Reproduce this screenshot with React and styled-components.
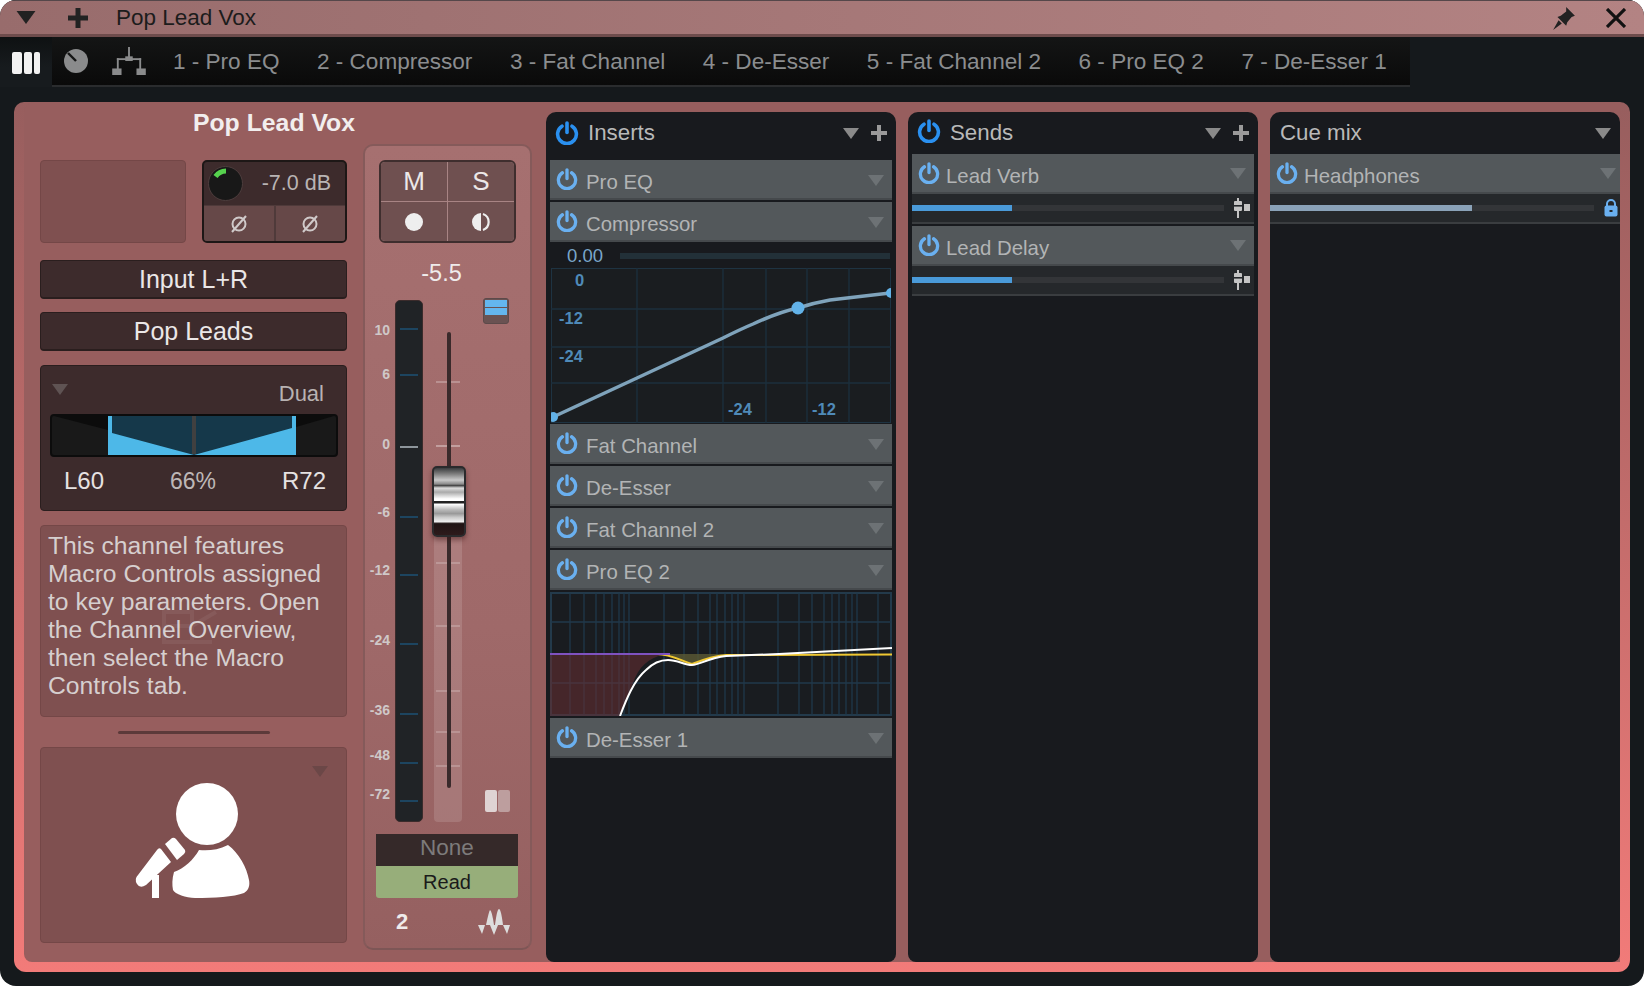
import React from "react";
import styled, { createGlobalStyle } from "styled-components";

const Global = createGlobalStyle`
  html, body { margin: 0; padding: 0; background: #fff; }
  * { box-sizing: border-box; }
  body { font-family: "Liberation Sans", Arial, sans-serif; }
`;

const Win = styled.div`
  width: 1644px;
  height: 986px;
  background: #15191c;
  border-radius: 16px;
  overflow: hidden;
  display: flex;
  flex-direction: column;
`;

const TitleBar = styled.div`
  height: 37px;
  flex: none;
  display: flex;
  align-items: center;
  padding: 0 18px 0 16px;
  color: #1c1c1c;
  font-size: 22.5px;
  background: linear-gradient(90deg, #986c6c, #b38383);
  border-top: 1px solid #55474a;
  border-bottom: 3px solid #6e4c4c;
`;

const TitleSpacer = styled.span`
  width: 32px;
`;

const TitleText = styled.span`
  margin-left: 28px;
  flex: 1;
`;

const PinGlyph = styled.svg`
  margin-right: 30px;
`;

const ToolBar = styled.div`
  height: 50px;
  flex: none;
  display: flex;
`;

const ToolIcons = styled.div`
  width: 52px;
  flex: none;
  padding: 15px 0 0 12px;
  background: linear-gradient(180deg, #0e1112, #171b1e 60%);
`;

const TabStrip = styled.div`
  width: 1358px;
  display: flex;
  align-items: center;
  gap: 37.5px;
  padding-left: 121px;
  padding-top: 2px;
  font-size: 22.55px;
  color: #8b8d8f;
  background: linear-gradient(180deg, #141515, #0a0a0a);
  border-bottom: 2px solid #2a2c2e;
`;

const ToolGlyphs = styled.div`
  position: absolute;
  left: 63px;
  top: 47px;
  display: flex;
  gap: 23px;
  align-items: center;
`;

const Panel = styled.div`
  margin: 15px 14px 0 14px;
  height: 870px;
  padding: 0 10px 10px 10px;
  border-radius: 10px 10px 12px 12px;
  background: linear-gradient(180deg, #975e5e 0%, #f27b79 100%);
`;

const Inner = styled.div`
  height: 100%;
  display: flex;
  background: #975e5e;
  border-radius: 10px 0 0 8px;
`;

const ChannelArea = styled.div`
  width: 522px;
  flex: none;
  display: flex;
  flex-direction: column;
`;

const ChannelTitle = styled.div`
  height: 42px;
  flex: none;
  line-height: 42px;
  padding-right: 22px;
  text-align: center;
  font-size: 24.8px;
  font-weight: 700;
  color: #f2eeee;
`;

const ChannelBody = styled.div`
  display: flex;
  padding-left: 16px;
  gap: 16px;
`;

const LeftCol = styled.div`
  width: 307px;
  flex: none;
  padding-top: 16px;
  display: flex;
  flex-direction: column;
`;

const TopBoxes = styled.div`
  display: flex;
  justify-content: space-between;
`;

const RecessBox = styled.div`
  background: #7f5050;
  border: 1px solid #744747;
  border-radius: 4px;
`;

const EmptyBox = styled(RecessBox)`
  width: 146px;
  height: 83px;
`;

const GainBox = styled.div`
  width: 145px;
  height: 83px;
  background: #3d2b2c;
  border: 2px solid #1d1716;
  border-radius: 5px;
  display: flex;
  flex-direction: column;
  overflow: hidden;
`;

const GainTop = styled.div`
  height: 43px;
  flex: none;
  display: flex;
  align-items: center;
  padding: 0 14px 0 4px;
  justify-content: space-between;
  color: #b9b4b4;
  font-size: 21.5px;
`;

const Knob = styled.div`
  width: 35px;
  height: 35px;
  position: relative;
  border-radius: 50%;
  background: #181818;
  border: 1px solid #4d3d3d;
`;

const PhaseRow = styled.div`
  flex: 1;
  display: flex;
  gap: 2px;
  background: #4f3a3a;
  padding-top: 1px;
`;

const PhaseCell = styled.div`
  flex: 1;
  background: #664848;
  display: flex;
  align-items: center;
  justify-content: center;
`;

const DarkButton = styled.div`
  height: 39px;
  margin-top: ${(p) => p.$top}px;
  display: flex;
  align-items: center;
  justify-content: center;
  background: #3d2b2c;
  border: 1px solid #2a1e1e;
  border-bottom-width: 2px;
  border-radius: 4px;
  color: #ebe7e7;
  font-size: 25px;
`;

const PanBox = styled.div`
  height: 146px;
  margin-top: 14px;
  padding: 14px 8px 0 8px;
  background: #3d2b2c;
  border: 1px solid #2a1e1e;
  border-radius: 4px;
`;

const PanHead = styled.div`
  height: 34px;
  display: flex;
  justify-content: space-between;
  padding: 0 14px 0 3px;
  font-size: 22px;
  color: #b8b2b2;
`;

const PanArrow = styled.div`
  display: flex;
  height: 11px;
  margin-top: 4px;
`;

const PanMode = styled.span`
  padding-top: 1px;
`;

const PanBar = styled.div`
  height: 43px;
  margin-left: 1px;
  border-radius: 4px;
  background: #191919;
  border: 2px solid #0c0c0c;
  overflow: hidden;
`;

const PanLabels = styled.div`
  display: flex;
  justify-content: space-between;
  padding: 10px 12px 0 15px;
  font-size: 24px;
  color: #e6e2e2;
`;

const PanPct = styled.span`
  font-size: 23px;
  color: #bdb7b7;
  padding-top: 1px;
`;

const NoteBox = styled(RecessBox)`
  height: 192px;
  margin-top: 14px;
  padding: 6px 10px 6px 7px;
  position: relative;
  font-size: 24.7px;
  line-height: 27.9px;
  color: #d6cfcf;
`;

const NoteMark = styled.svg`
  position: absolute;
  left: 121px;
  top: 84px;
`;

const Divider = styled.div`
  width: 152px;
  height: 3px;
  margin: 14px auto 13px;
  background: #5c3a3a;
  border-radius: 2px;
`;

const AvatarBox = styled(RecessBox)`
  height: 196px;
  position: relative;
  display: flex;
  align-items: center;
  justify-content: center;
  padding-bottom: 9px;
`;

const CornerArrow = styled.div`
  position: absolute;
  display: flex;
  right: 18px;
  top: 18px;
`;

const Strip = styled.div`
  width: 169px;
  height: 806px;
  flex: none;
  padding: 14px 14px 0;
  border: 2px solid #855a5a;
  border-bottom-color: #7d5656;
  border-radius: 10px;
  background: linear-gradient(180deg, #a67070 0%, #9f6969 60%, #956060 100%);
`;

const MsGrid = styled.div`
  width: 137px;
  height: 83px;
  display: grid;
  grid-template-columns: 1fr 1fr;
  grid-template-rows: 1fr 1fr;
  gap: 1px;
  background: #a88484;
  border: 2px solid #3f2e2e;
  border-radius: 6px;
  overflow: hidden;
`;

const MsCell = styled.div`
  display: flex;
  align-items: center;
  justify-content: center;
  background: #6f5050;
  color: #ece8e8;
  font-size: 26px;
`;

const PeakValue = styled.div`
  height: 57px;
  line-height: 60px;
  text-align: center;
  padding-right: 12px;
  font-size: 23.5px;
  color: #efebeb;
`;

const MeterArea = styled.div`
  position: relative;
  height: 522px;
`;

const ScaleLabel = styled.span`
  position: absolute;
  right: 126px;
  top: ${(p) => p.$y}px;
  transform: translateY(-50%);
  font-size: 14px;
  font-weight: 700;
  color: #cfc8c8;
  white-space: nowrap;
`;

const Meter = styled.div`
  position: absolute;
  left: 16px;
  top: 0;
  width: 28px;
  height: 100%;
  background: #202326;
  border: 1px solid #3b2b2b;
  border-radius: 5px;
`;

const Tick = styled.i`
  position: absolute;
  left: 4px;
  right: 4px;
  top: ${(p) => p.$y}px;
  height: 2px;
  background: ${(p) => (p.$zero ? "#8d959b" : "#1d4560")};
`;

const FaderBand = styled.div`
  position: absolute;
  left: 55px;
  top: 237px;
  width: 28px;
  height: 285px;
  background: rgba(255, 255, 255, 0.13);
  border-radius: 0 0 4px 4px;
`;

const FaderTrack = styled.div`
  position: absolute;
  left: 68px;
  top: 32px;
  width: 4px;
  height: 456px;
  border-radius: 2px;
  background: #3a2a2b;
`;

const FaderTick = styled.i`
  position: absolute;
  left: 57px;
  width: 24px;
  height: 2px;
  top: ${(p) => p.$y}px;
  background: rgba(255, 255, 255, ${(p) => p.$a});
`;

const FaderCap = styled.div`
  position: absolute;
  left: 53px;
  top: 166px;
  width: 34px;
  height: 71px;
  border: 2px solid #2a2a2c;
  border-radius: 5px;
  box-shadow: 0 3px 5px rgba(60, 20, 20, 0.5);
  background: linear-gradient(
    180deg,
    #3a3c3e 0%,
    #777 8%,
    #c9c9c9 18%,
    #8a8a8a 24%,
    #444 26%,
    #ddd 30%,
    #aaa 36%,
    #fff 46%,
    #fff 49%,
    #222 50%,
    #222 52%,
    #fff 54%,
    #bbb 62%,
    #999 68%,
    #ccc 74%,
    #eee 80%,
    #1f1414 83%,
    #2d1a1b 100%
  );
`;

const LaneButton = styled.div`
  position: absolute;
  left: 104px;
  top: -2px;
  width: 26px;
  height: 26px;
  padding: 1px;
  display: flex;
  flex-direction: column;
  gap: 1px;
  background: #6a5252;
  border: 1px solid #5c4a4a;
  border-radius: 3px;
`;

const LaneStripe = styled.div`
  height: 7px;
  background: ${(p) => p.$c};
`;

const PairIcon = styled.div`
  position: absolute;
  left: 106px;
  top: 490px;
  display: flex;
  gap: 1px;
`;

const PairBar = styled.div`
  width: 12px;
  height: 22px;
  border-radius: 2px;
  background: ${(p) => p.$c};
`;

const Automation = styled.div`
  width: 142px;
  margin: 12px 0 0 -3px;
  border-radius: 0 0 3px 3px;
  overflow: hidden;
`;

const AutoCell = styled.div`
  height: 32px;
  display: flex;
  align-items: center;
  justify-content: center;
  padding-bottom: ${(p) => p.$lift || 0}px;
  font-size: ${(p) => p.$size}px;
  background: ${(p) => p.$bg};
  color: ${(p) => p.$fg};
`;

const StripFoot = styled.div`
  display: flex;
  justify-content: space-between;
  align-items: center;
  padding: 11px 6px 0 17px;
  font-size: 22px;
  font-weight: 700;
  color: #efebeb;
`;

const Panels = styled.div`
  flex: 1;
  display: flex;
  gap: 12px;
  padding-top: 10px;
`;

const DarkPanel = styled.div`
  flex: 1;
  background: #181a1e;
  border-radius: 10px 10px 8px 8px;
  display: flex;
  flex-direction: column;
`;

const PanelHead = styled.div`
  height: ${(p) => p.$h}px;
  flex: none;
  display: flex;
  align-items: center;
  padding: 0 9px ${(p) => p.$h - 42}px ${(p) => (p.$nopower ? 10 : 9)}px;
  font-size: 22.3px;
  color: #b9b9b9;
`;

const HeadPower = styled.span`
  display: flex;
  margin-top: ${(p) => -(p.$lift || 0)}px;
`;

const HeadName = styled.span`
  flex: 1;
  margin-left: ${(p) => (p.$nopower ? 0 : 9)}px;
`;

const HeadGlyphs = styled.div`
  display: flex;
  align-items: center;
  gap: 12px;
`;

const RowStack = styled.div`
  display: flex;
  flex-direction: column;
  gap: 2px;
  margin: 0 ${(p) => (p.$flush ? 0 : 4)}px;
`;

const Row = styled.div`
  height: 40px;
  flex: none;
  display: flex;
  align-items: center;
  padding: 0 ${(p) => (p.$flush ? 4 : 8)}px 0 6px;
  background: #53585b;
  border-bottom: 2px solid #45494c;
  color: #b2b4b5;
  font-size: 20.4px;
`;

const RowName = styled.span`
  flex: 1;
  margin-left: ${(p) => p.$gap}px;
  padding-top: 6px;
`;

const RowArrow = styled.span`
  display: flex;
  padding-top: 2px;
`;

const CompView = styled.div`
  height: 178px;
  flex: none;
  padding: 0 1px;
`;

const CompValue = styled.div`
  height: 24px;
  display: flex;
  align-items: center;
  padding-left: 16px;
  gap: 17px;
  font-size: 18.5px;
  color: #7aa6ca;
`;

const CompMeter = styled.div`
  flex: 1;
  height: 6px;
  background: #223038;
  margin-right: 1px;
`;

const Graph = styled.svg`
  display: block;
`;

const SendBar = styled.div`
  height: 30px;
  flex: none;
  display: flex;
  align-items: center;
  gap: ${(p) => p.$gap}px;
  padding-right: ${(p) => p.$pad}px;
  background: #25282b;
  border-bottom: 2px solid #3a3d40;
`;

const SendTrack = styled.div`
  flex: 1;
  height: 6px;
  background: #333538;
`;

const SendFill = styled.div`
  height: 100%;
  width: ${(p) => p.$w}px;
  background: ${(p) => p.$c};
`;

const Power = ({ size = 22, color = "#6ab0f0" }) => (
  <svg width={size} height={size} viewBox="0 0 24 24" fill="none" stroke={color} strokeWidth="3.6" strokeLinecap="round">
    <path d="M7 5.2a9.4 9.4 0 1 0 10 0" />
    <path d="M12 2v9.5" />
  </svg>
);

const Tri = ({ w = 16, h = 11, color = "#6d7275" }) => (
  <svg width={w} height={h} viewBox="0 0 16 11">
    <path d="M0 0h16L8 11z" fill={color} />
  </svg>
);

const Plus = ({ size = 16, color = "#9a9a9a", w = 4 }) => (
  <svg width={size} height={size} viewBox="0 0 16 16">
    <path d={`M${8 - w / 2} 0h${w}v${8 - w / 2}H16v${w}H${8 + w / 2}V16H${8 - w / 2}V${8 + w / 2}H0V${8 - w / 2}h${8 - w / 2}z`} fill={color} />
  </svg>
);

const PhaseIcon = () => (
  <svg width="18" height="20" viewBox="0 0 18 20" fill="none" stroke="#cfc9c9" strokeWidth="2">
    <circle cx="9" cy="10" r="6.5" />
    <path d="M2 18L16 2" />
  </svg>
);

const SendKnobIcon = () => (
  <svg width="18" height="20" viewBox="0 0 18 20">
    <path d="M5 0h2v3h2a1 1 0 0 1 1 1v8a1 1 0 0 1-1 1H7v7H5v-7H3a1 1 0 0 1-1-1V4a1 1 0 0 1 1-1h2z" fill="#c4c4c4" />
    <rect x="2" y="7" width="8" height="1.6" fill="#25282b" />
    <rect x="12" y="6" width="6" height="7" fill="#c4c4c4" />
  </svg>
);

const LockIcon = () => (
  <svg width="14" height="18" viewBox="0 0 14 18">
    <path d="M3 7V5a4 4 0 0 1 8 0v2" fill="none" stroke="#6ab0f0" strokeWidth="2" />
    <rect x="0.5" y="6.5" width="13" height="11" rx="2" fill="#6ab0f0" />
    <rect x="5.5" y="11" width="3" height="2" fill="#25282b" />
  </svg>
);

const MicPerson = () => (
  <svg width="120" height="116" viewBox="0 0 120 116" fill="#fff">
    <ellipse cx="73" cy="31" rx="31" ry="31" />
    <path d="M94 62C84 67 74 68 65 67C60 76 50 86 40 89C38 96 38 102 39 107C41 111 52 115 61 115C80 115 100 114 110 110C115 107 116 102 115 97C113 85 105 70 94 62Z" />
    <path d="M31 61L38 55Q40 54 42 56L51 67Q52 69 50 71L43 77Z" />
    <path d="M23 67Q25 64 27 66L37 79L12 102Q6 106 3 101Q0 96 4 92Z" />
    <rect x="18" y="92" width="7" height="23" />
  </svg>
);

const scaleMarks = [
  ["10", 30, 29],
  ["6", 74, 75],
  ["0", 144, 147],
  ["-6", 212, 217],
  ["-12", 270, 275],
  ["-24", 340, 344],
  ["-36", 410, 414],
  ["-48", 455, 463],
  ["-72", 494, 501],
];

const faderTicks = [
  [81, 0.25],
  [145, 0.35],
  [262, 0.2],
  [325, 0.2],
  [390, 0.2],
  [431, 0.2],
  [465, 0.2],
];

const tabs = ["1 - Pro EQ", "2 - Compressor", "3 - Fat Channel", "4 - De-Esser", "5 - Fat Channel 2", "6 - Pro EQ 2", "7 - De-Esser 1"];

const CompGraph = () => {
  const v = [86, 172, 215, 256, 298];
  const h = [41, 79, 115];
  const blue = "#4f8ab8";
  return (
    <Graph width="340" height="155" viewBox="0 0 340 155">
      <rect x="0.5" y="0.5" width="339" height="154" fill="#1a1d20" stroke="#1e3342" />
      {v.map((x) => (
        <line key={x} x1={x} x2={x} y1="0" y2="155" stroke="#1c2f3d" strokeWidth="1.4" />
      ))}
      {h.map((y) => (
        <line key={y} x1="0" x2="340" y1={y} y2={y} stroke="#1c2f3d" strokeWidth="1.4" />
      ))}
      <g fontFamily="Liberation Sans, Arial, sans-serif" fontSize="16.5" fontWeight="700" fill={blue}>
        <text x="24" y="18">0</text>
        <text x="8" y="56">-12</text>
        <text x="8" y="94">-24</text>
        <text x="177" y="147">-24</text>
        <text x="261" y="147">-12</text>
      </g>
      <path d="M2 149L86 110L172 70Q190 61 202 56Q228 44 247 40Q262 35 279 32L339 25" fill="none" stroke="#7fa3bb" strokeWidth="3.5" />
      <circle cx="247" cy="40" r="6.5" fill="#62b2e8" />
      <circle cx="340" cy="25" r="5" fill="#62b2e8" />
      <circle cx="2" cy="149" r="5" fill="#62b2e8" />
    </Graph>
  );
};

const EqGraph = () => {
  const v = [20, 34, 46, 54, 62, 69, 74, 79, 114, 134, 148, 160, 167, 175, 182, 188, 194, 228, 249, 262, 274, 282, 289, 296, 302, 307, 328];
  const h = [30, 91];
  return (
    <Graph width="342" height="124" viewBox="0 0 342 124">
      <rect x="1" y="1" width="340" height="122" fill="#191c20" stroke="#233a4b" strokeWidth="2" />
      {v.map((x) => (
        <line key={x} x1={x} x2={x} y1="1" y2="123" stroke="#20394b" strokeWidth="1.3" />
      ))}
      {h.map((y) => (
        <line key={y} x1="1" x2="341" y1={y} y2={y} stroke="#20394b" strokeWidth="1.5" />
      ))}
      <path d="M0 62H118C104 64 92 70 85 86L70 124H0z" fill="#6a3033" fillOpacity="0.55" />
      <path d="M118 62H176C165 63 155 73 142 73C130 73 128 66 118 62z" fill="#5b5a35" fillOpacity="0.8" />
      <path d="M55 62H108C118 62 130 68 142 72C152 68 162 64 176 63L342 62.5" stroke="#f0c832" strokeWidth="2" fill="none" />
      <path d="M0 62H120" stroke="#7f52c0" strokeWidth="2" fill="none" />
      <path d="M70 124C76 108 84 88 96 78C104 70 112 68 118 68C128 68 134 73 142 73C150 73 158 66 176 64L229 62L342 56" stroke="#fff" strokeWidth="2" fill="none" />
    </Graph>
  );
};

export default function App() {
  return (
    <>
      <Global />
      <Win>
        <TitleBar>
          <Tri w={20} h={13} color="#222" />
          <TitleSpacer />
          <Plus size={20} color="#222" w={4} />
          <TitleText>Pop Lead Vox</TitleText>
          <PinGlyph width="24" height="24" viewBox="0 0 22 22">
            <path d="M13 1l8 8-3 1-4 5-1 3-8-8 3-1 5-4zM6 13l3 3-8 6z" fill="#222" />
          </PinGlyph>
          <svg width="20" height="20" viewBox="0 0 20 20" stroke="#111" strokeWidth="3.2">
            <path d="M1 1l18 18M19 1L1 19" />
          </svg>
        </TitleBar>
        <ToolBar>
          <ToolIcons>
            <svg width="28" height="22" viewBox="0 0 28 22" fill="#f2f2f2">
              <rect x="0" y="0" width="10" height="22" rx="2" />
              <rect x="12" y="0" width="8" height="22" rx="2" />
              <rect x="22" y="0" width="6" height="22" rx="2" />
            </svg>
          </ToolIcons>
          <TabStrip>
            <ToolGlyphs>
              <svg width="26" height="26" viewBox="0 0 26 26">
                <circle cx="13" cy="13" r="12" fill="#8a8b8c" />
                <path d="M13 13L5 5" stroke="#141515" strokeWidth="2.4" />
              </svg>
              <svg width="34" height="28" viewBox="0 0 36 30" fill="#8a8b8c">
                <rect x="17" y="0" width="2" height="12" />
                <rect x="14" y="10" width="8" height="5" />
                <rect x="5" y="12" width="26" height="2" />
                <rect x="5" y="12" width="2" height="12" />
                <rect x="29" y="12" width="2" height="12" />
                <rect x="0" y="23" width="10" height="7" />
                <rect x="26" y="23" width="10" height="7" />
              </svg>
            </ToolGlyphs>
            {tabs.map((t) => (
              <span key={t}>{t}</span>
            ))}
          </TabStrip>
        </ToolBar>
        <Panel>
          <Inner>
            <ChannelArea>
              <ChannelTitle>Pop Lead Vox</ChannelTitle>
              <ChannelBody>
                <LeftCol>
                  <TopBoxes>
                    <EmptyBox />
                    <GainBox>
                      <GainTop>
                        <Knob>
                          <svg width="33" height="33" viewBox="0 0 33 33" fill="none">
                            <path d="M6.5 9.5A13 13 0 0 1 17 4" stroke="#56d24e" strokeWidth="5" />
                          </svg>
                        </Knob>
                        <span>-7.0 dB</span>
                      </GainTop>
                      <PhaseRow>
                        <PhaseCell><PhaseIcon /></PhaseCell>
                        <PhaseCell><PhaseIcon /></PhaseCell>
                      </PhaseRow>
                    </GainBox>
                  </TopBoxes>
                  <DarkButton $top={17}>Input L+R</DarkButton>
                  <DarkButton $top={13}>Pop Leads</DarkButton>
                  <PanBox>
                    <PanHead>
                      <PanArrow>
                        <Tri w={16} h={11} color="#5f5353" />
                      </PanArrow>
                      <PanMode>Dual</PanMode>
                    </PanHead>
                    <PanBar>
                      <svg width="284" height="39" viewBox="0 0 284 39">
                        <path d="M2 0H56V14z" fill="#0c0c0c" />
                        <path d="M244 0H282L244 11z" fill="#0c0c0c" />
                        <rect x="56" y="0" width="188" height="39" fill="#15384a" />
                        <path d="M56 0H60V17L142 39H56z" fill="#4db8e8" />
                        <path d="M244 0H240V12L142 39H244z" fill="#4db8e8" />
                        <rect x="140" y="0" width="4" height="38" fill="#404040" />
                      </svg>
                    </PanBar>
                    <PanLabels>
                      <span>L60</span>
                      <PanPct>66%</PanPct>
                      <span>R72</span>
                    </PanLabels>
                  </PanBox>
                  <NoteBox>
                    <NoteMark width="58" height="34" viewBox="0 0 58 34" fill="none" stroke="rgba(255,255,255,0.06)" strokeWidth="4">
                      <path d="M2 2H30V32H2zM2 16H30M30 16L54 2M30 32H50" />
                    </NoteMark>
                    This channel features Macro Controls assigned to key parameters. Open the Channel Overview, then select the Macro Controls tab.
                  </NoteBox>
                  <Divider />
                  <AvatarBox>
                    <CornerArrow>
                      <Tri w={16} h={11} color="#6b4747" />
                    </CornerArrow>
                    <MicPerson />
                  </AvatarBox>
                </LeftCol>
                <Strip>
                  <MsGrid>
                    <MsCell>M</MsCell>
                    <MsCell>S</MsCell>
                    <MsCell>
                      <svg width="20" height="20" viewBox="0 0 20 20"><circle cx="10" cy="10" r="9" fill="#eee" /></svg>
                    </MsCell>
                    <MsCell>
                      <svg width="20" height="20" viewBox="0 0 20 20">
                        <path d="M10 1A9 9 0 0 0 10 19z" fill="#eee" />
                        <path d="M12 2A8.5 8.5 0 0 1 12 18" fill="none" stroke="#eee" strokeWidth="2.2" />
                      </svg>
                    </MsCell>
                  </MsGrid>
                  <PeakValue>-5.5</PeakValue>
                  <MeterArea>
                    {scaleMarks.map(([t, y]) => (
                      <ScaleLabel key={t} $y={y}>{t}</ScaleLabel>
                    ))}
                    <Meter>
                      {scaleMarks.map(([t, , y]) => (
                        <Tick key={t} $y={y - 2} $zero={t === "0"} />
                      ))}
                    </Meter>
                    <FaderBand />
                    {faderTicks.map(([y, a]) => (
                      <FaderTick key={y} $y={y} $a={a} />
                    ))}
                    <FaderTrack />
                    <FaderCap />
                    <LaneButton>
                      <LaneStripe $c="#64b6ee" />
                      <LaneStripe $c="#64b6ee" />
                    </LaneButton>
                    <PairIcon>
                      <PairBar $c="#dfd3d3" />
                      <PairBar $c="#bd9e9e" />
                    </PairIcon>
                  </MeterArea>
                  <Automation>
                    <AutoCell $bg="#352929" $fg="#7d7b7b" $size={22.5} $lift={4}>None</AutoCell>
                    <AutoCell $bg="#97ae7a" $fg="#1a1a1a" $size={20}>Read</AutoCell>
                  </Automation>
                  <StripFoot>
                    <span>2</span>
                    <svg width="32" height="26" viewBox="0 0 32 26" fill="#ddd">
                      <path d="M0 16H7L4 25z" />
                      <path d="M9 16Q12 2 13 1Q15 2 17 16z" transform="translate(-1 0)" />
                      <path d="M12 16H20L16 26z" />
                      <path d="M19 16Q21 0 23 0Q25 0 27 16z" transform="translate(-2 0)" />
                      <path d="M25 16H32L29 25z" />
                    </svg>
                  </StripFoot>
                </Strip>
              </ChannelBody>
            </ChannelArea>
            <Panels>
              <DarkPanel>
                <PanelHead $h={48}>
                  <Power size={24} color="#2a90f0" />
                  <HeadName>Inserts</HeadName>
                  <HeadGlyphs>
                    <Tri color="#8a8a8a" />
                    <Plus />
                  </HeadGlyphs>
                </PanelHead>
                <RowStack>
                  <Row><Power /><RowName $gap={8}>Pro EQ</RowName><RowArrow><Tri /></RowArrow></Row>
                  <Row><Power /><RowName $gap={8}>Compressor</RowName><RowArrow><Tri /></RowArrow></Row>
                  <CompView>
                    <CompValue>0.00<CompMeter /></CompValue>
                    <CompGraph />
                  </CompView>
                  <Row><Power /><RowName $gap={8}>Fat Channel</RowName><RowArrow><Tri /></RowArrow></Row>
                  <Row><Power /><RowName $gap={8}>De-Esser</RowName><RowArrow><Tri /></RowArrow></Row>
                  <Row><Power /><RowName $gap={8}>Fat Channel 2</RowName><RowArrow><Tri /></RowArrow></Row>
                  <Row><Power /><RowName $gap={8}>Pro EQ 2</RowName><RowArrow><Tri /></RowArrow></Row>
                  <EqGraph />
                  <Row><Power /><RowName $gap={8}>De-Esser 1</RowName><RowArrow><Tri /></RowArrow></Row>
                </RowStack>
              </DarkPanel>
              <DarkPanel>
                <PanelHead $h={42}>
                  <HeadPower $lift={4}><Power size={24} color="#2a90f0" /></HeadPower>
                  <HeadName>Sends</HeadName>
                  <HeadGlyphs>
                    <Tri color="#8a8a8a" />
                    <Plus />
                  </HeadGlyphs>
                </PanelHead>
                <RowStack>
                  <div>
                    <Row><Power /><RowName $gap={6}>Lead Verb</RowName><Tri /></Row>
                    <SendBar $gap={8} $pad={4}>
                      <SendTrack><SendFill $w={100} $c="#4a9ad9" /></SendTrack>
                      <SendKnobIcon />
                    </SendBar>
                  </div>
                  <div>
                    <Row><Power /><RowName $gap={6}>Lead Delay</RowName><Tri /></Row>
                    <SendBar $gap={8} $pad={4}>
                      <SendTrack><SendFill $w={100} $c="#4a9ad9" /></SendTrack>
                      <SendKnobIcon />
                    </SendBar>
                  </div>
                </RowStack>
              </DarkPanel>
              <DarkPanel>
                <PanelHead $h={42} $nopower>
                  <HeadName $nopower>Cue mix</HeadName>
                  <Tri color="#8a8a8a" />
                </PanelHead>
                <RowStack $flush>
                  <div>
                    <Row $flush><Power /><RowName $gap={6}>Headphones</RowName><Tri /></Row>
                    <SendBar $gap={10} $pad={2}>
                      <SendTrack><SendFill $w={202} $c="#8aa2b8" /></SendTrack>
                      <LockIcon />
                    </SendBar>
                  </div>
                </RowStack>
              </DarkPanel>
            </Panels>
          </Inner>
        </Panel>
      </Win>
    </>
  );
}
